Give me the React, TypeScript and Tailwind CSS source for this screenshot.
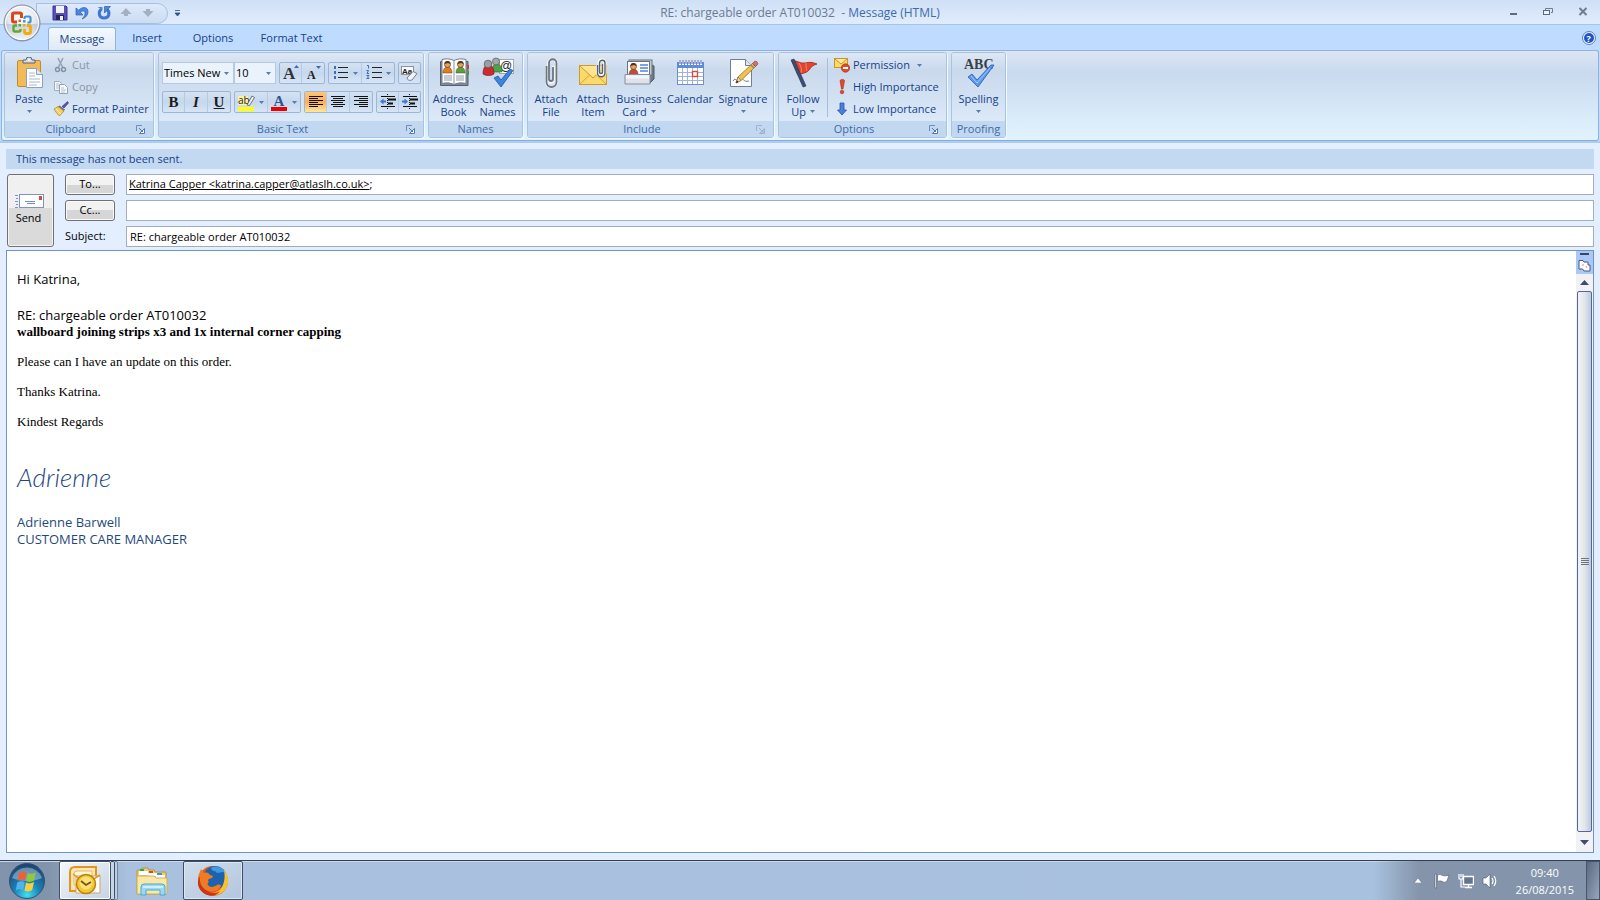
import React from 'react';

type IconProps = { children: React.ReactNode; w?: number; h?: number; box?: string };

function Icon({ children, w = 16, h = 16, box }: IconProps) {
  return (
    <svg width={w} height={h} viewBox={box ?? `0 0 ${w} ${h}`} className="shrink-0" aria-hidden="true">
      {children}
    </svg>
  );
}

function Caret({ dim = false }: { dim?: boolean }) {
  return (
    <Icon w={5} h={3}>
      <path d="M0 0h5L2.500 3z" fill={dim ? '#8fa3c2' : '#567db1'} />
    </Icon>
  );
}

function OfficeLogo() {
  return (
    <Icon w={38} h={38}>
      <defs>
        <radialGradient id="orb" cx="50%" cy="35%" r="65%">
          <stop offset="0" stopColor="#ffffff" />
          <stop offset="0.6" stopColor="#e4e8ee" />
          <stop offset="1" stopColor="#9aa6b8" />
        </radialGradient>
        <linearGradient id="orbLow" x1="0" y1="0" x2="0" y2="1">
          <stop offset="0" stopColor="#b9c2d0" stopOpacity="0.7" />
          <stop offset="1" stopColor="#ffffff" stopOpacity="0.9" />
        </linearGradient>
      </defs>
      <circle cx="19" cy="19" r="18" fill="url(#orb)" stroke="#7d8ca5" strokeWidth="1" />
      <path d="M2 20h34a17 16 0 0 1-34 0z" fill="url(#orbLow)" />
      <circle cx="19" cy="19" r="16.500" fill="none" stroke="#fff" strokeWidth="1" />
      <g fill="none">
        <path d="M14 18h-3q-1.500 0-1.500-1.500v-6Q9.500 9 11 9h6q1.500 0 1.500 1.500V14" stroke="#d9481c" strokeWidth="3" />
        <path d="M21.500 15v-1q0-1.500 1.500-1.500h3q1.500 0 1.500 1.500v3q0 1.500-1.500 1.500h-1.500" stroke="#3f93d8" strokeWidth="2.200" />
        <path d="M14 21.500h-2q-1.500 0-1.500 1.500v3q0 1.500 1.500 1.500h4q1.500 0 1.500-1.500v-1" stroke="#5fa832" strokeWidth="2.400" />
        <path d="M24 21.500h2q1.500 0 1.500 1.500v5q0 1.500-1.500 1.500h-3q-1.500 0-1.500-1.500v-3" stroke="#f4ab12" strokeWidth="2.800" />
      </g>
      <rect x="15.500" y="15.500" width="2.500" height="2.500" fill="#e8641f" />
      <rect x="20" y="16" width="2.500" height="2.500" fill="#3f93d8" />
      <rect x="15.500" y="20" width="2.500" height="2.500" fill="#5fa832" />
      <rect x="20" y="20" width="2.500" height="2.500" fill="#f4ab12" />
    </Icon>
  );
}

function SaveIcon() {
  return (
    <Icon>
      <path d="M1 1h13l1 1v13H1z" fill="#5a4fb8" stroke="#3a3590" />
      <rect x="4" y="1" width="8" height="7" fill="#eef3fd" />
      <rect x="4" y="10" width="8" height="5" fill="#26245c" />
      <rect x="8" y="11" width="3" height="4" fill="#f1f4fb" />
    </Icon>
  );
}

function UndoIcon() {
  return (
    <Icon>
      <path d="M2 3v7h7L6.500 7.300C9 5 11.500 6 11 9c-.3 2-1.500 3.600-3 5 4-1.600 6-4 6-7.500C14 2 8.500 1 4.700 5.200z" fill="#4f86dd" stroke="#2c5fb8" strokeWidth=".7" />
    </Icon>
  );
}

function RedoIcon() {
  return (
    <Icon>
      <path d="M5.500 4C2 6.500 2.500 13 8 13s6.500-6 2.500-9" fill="none" stroke="#3f76d2" strokeWidth="3" />
      <path d="M8.500 1.500h6l-6 6.500z" fill="#4f86dd" stroke="#2c5fb8" strokeWidth=".7" />
      <path d="M1.500 2h5v3z" fill="#4f86dd" />
    </Icon>
  );
}

function PasteIcon() {
  return (
    <Icon w={32} h={32}>
      <rect x="4.500" y="3.500" width="23" height="26" rx="1.500" fill="#f0bb58" stroke="#c68a2c" />
      <path d="M10 6V3h3a3 3 0 0 1 6 0h3v3z" fill="#d7dbe2" stroke="#5c6370" />
      <circle cx="16" cy="3" r="1" fill="#fff" />
      <path d="M13.500 11.500h10l6 6v13h-16z" fill="#fff" stroke="#8aa0c0" />
      <path d="M23.500 11.500v6h6" fill="#dce7f5" stroke="#8aa0c0" />
      <path d="M16 16h6M16 19h6M16 22h11M16 25h11M16 28h8" stroke="#a9b8ce" />
    </Icon>
  );
}

function CutIcon() {
  return (
    <Icon>
      <path d="M5 1l5 10M10 1L5 11" stroke="#98a4b4" strokeWidth="1.600" />
      <circle cx="4.500" cy="12.500" r="2" fill="none" stroke="#8391a5" strokeWidth="1.400" />
      <circle cx="10.500" cy="12.500" r="2" fill="none" stroke="#8391a5" strokeWidth="1.400" />
    </Icon>
  );
}

function CopyIcon() {
  return (
    <Icon>
      <path d="M1.500 2.500h5l2 2v7h-7z" fill="#f3f6fa" stroke="#a0acbe" />
      <path d="M6.500 5.500h5l3 3v6h-8z" fill="#f8fafc" stroke="#94a2b7" />
      <path d="M3 5h3M3 7h3M3 9h3M8 9h3M8 11h5M8 13h4" stroke="#b4bfce" />
    </Icon>
  );
}

function PainterIcon() {
  return (
    <Icon>
      <path d="M14.500 0.500l1 1.500-4.500 5-2-1.500z" fill="#5b51b5" stroke="#37307f" strokeWidth=".6" />
      <path d="M6.500 4.500l5.500 4-1.500 2-6-4.500z" fill="#6e7480" />
      <path d="M1 8l4-2.500 6 4.500-4.500 5C4.500 13 2.500 11 1 8z" fill="#f2cf63" stroke="#a8862b" strokeWidth=".7" />
      <path d="M3 8l5 5" stroke="#fff3b4" />
    </Icon>
  );
}

function Person({ x, y, c }: { x: number; y: number; c: string }) {
  return (
    <g transform={`translate(${x} ${y})`}>
      <path d="M0 12c0-4 2-6 4.500-6S9 8 9 12z" fill={c} stroke="#5a3b22" strokeWidth=".5" />
      <circle cx="4.500" cy="3.500" r="3" fill="#e9a05c" stroke="#5a3b22" strokeWidth=".7" />
      <path d="M1.500 3a3 3 0 0 1 6 0L5 2z" fill="#4a3424" />
    </g>
  );
}

function AddressBookIcon() {
  return (
    <Icon w={32} h={32}>
      <path d="M2.500 4.500H30v24H2.500z" fill="#7f8a9a" stroke="#555f6e" />
      <path d="M4 2.500c4-1 8-1 12 1 4-2 8-2 12-1v24c-4-1-8-1-12 1-4-2-8-2-12-1z" fill="#fff" stroke="#77808d" />
      <path d="M16 3v24" stroke="#8a93a0" />
      <Person x={5} y={4} c="#e57a1d" />
      <Person x={18} y={4} c="#53a43d" />
      <path d="M6 19h8M6 21h8M6 23h8M18 19h8M18 21h8M18 23h8" stroke="#8f99a8" />
      <path d="M29 8h2v4h-2z" fill="#d63d2c" />
      <path d="M29 14h2v4h-2z" fill="#4a9a3c" />
    </Icon>
  );
}

function CheckNamesIcon() {
  return (
    <Icon w={32} h={32}>
      <rect x="17.500" y="2.500" width="14" height="14" fill="#fff" stroke="#a0a8b4" />
      <text x="18" y="13" fontSize="12" fontFamily="Liberation Sans" fill="#222">@</text>
      <path d="M10 15c0-6 2-8 5-8s5 3 5 8z" fill="#4ba546" stroke="#2c6c2c" strokeWidth=".6" />
      <circle cx="14" cy="4.500" r="3.500" fill="#a3a9a7" stroke="#55595c" strokeWidth=".7" />
      <path d="M1 17c0-6 2-9 5.500-9S12 11 12 17c-3 2-8 2-11 0z" fill="#cf2930" stroke="#7f1418" strokeWidth=".6" />
      <circle cx="6" cy="7" r="3.800" fill="#9a9fa4" stroke="#4f5357" strokeWidth=".7" />
      <path d="M12 21l4-2 3 4L28 12l3 1.500L19 30z" fill="#3c84dd" stroke="#1e56a8" strokeWidth=".8" />
    </Icon>
  );
}

function ClipIcon() {
  return (
    <Icon w={32} h={32}>
      <path d="M18.500 9v14a2.500 2.500 0 0 1-5 0V6.500a4 4 0 0 1 8 0V25a5 5 0 0 1-10 0V9" fill="none" stroke="#fff" strokeWidth="3" opacity=".7" />
      <path d="M18 10v12a2 2 0 0 1-4 0V6a3.500 3.500 0 0 1 7.500 0v19a5 5 0 0 1-10 0V9" fill="none" stroke="#6d747e" strokeWidth="1.800" />
    </Icon>
  );
}

function AttachItemIcon() {
  return (
    <Icon w={32} h={32}>
      <rect x="2.500" y="8.500" width="27" height="19" fill="#fbd96a" stroke="#cf9b2a" />
      <path d="M3 27l9.500-9M29 27l-9.500-9" stroke="#d8a83a" />
      <path d="M3 9l13 12L29 9" fill="#fde58f" stroke="#cf9b2a" />
      <path d="M26 7v8a2 2 0 0 1-4 0V6a3 3 0 0 1 6 0v10a4 4 0 0 1-7.500 0V8" fill="none" stroke="#fff" strokeWidth="3" />
      <path d="M25.500 7v8a1.500 1.500 0 0 1-3 0V6a2.700 2.700 0 0 1 5.500 0v10a3.700 3.700 0 0 1-7.500 0V8" fill="none" stroke="#596069" strokeWidth="1.400" />
    </Icon>
  );
}

function CardIcon() {
  return (
    <Icon w={32} h={32}>
      <path d="M27 7l4 2v13l-5 5V10z" fill="#707a89" stroke="#4f5866" />
      <rect x="6" y="3" width="23" height="15" fill="#c2cad6" stroke="#697484" />
      <rect x="4.500" y="4.500" width="22" height="16" fill="#fff" stroke="#697484" />
      <Person x={6} y={6} c="#c8473a" />
      <path d="M17 8h8M17 11h8M17 14h8" stroke="#4f86d6" strokeWidth="1.300" />
      <path d="M2 17.500h25V27H2z" fill="#dfe2e8" stroke="#878f9c" />
      <path d="M3 18.500h23v3H3z" fill="#f4f5f8" />
    </Icon>
  );
}

function CalendarIcon() {
  return (
    <Icon w={32} h={32}>
      <rect x="3.500" y="5.500" width="26" height="22" fill="#fff" stroke="#6e8fc9" />
      <rect x="3" y="5" width="27" height="6" fill="#5c8be0" />
      <path d="M6 3v5M9 3v5M12 3v5M15 3v5M18 3v5M21 3v5M24 3v5M27 3v5" stroke="#fff" strokeWidth="2" />
      <path d="M6 3v4M9 3v4M12 3v4M15 3v4M18 3v4M21 3v4M24 3v4M27 3v4" stroke="#4c5f86" strokeWidth="1" />
      <path d="M4 15.500h25M4 19.500h25M4 23.500h25M8.500 11v16M13.500 11v16M18.500 11v16M23.500 11v16" stroke="#9db3da" />
      <rect x="18.500" y="14.500" width="5" height="5" fill="#fff" stroke="#e2482d" strokeWidth="1.400" />
    </Icon>
  );
}

function SignatureIcon() {
  return (
    <Icon w={32} h={32}>
      <path d="M3.500 2.500h15l6 6v21h-21z" fill="#fff" stroke="#6f7f98" />
      <path d="M18.500 2.500v6h6" fill="#dce6f4" stroke="#6f7f98" />
      <path d="M6 24c3-5 4 3 7-1s3 3 9 1" fill="none" stroke="#5e7fb8" />
      <path d="M9 26l2-6L25.500 6.500l3 3-14 13.500z" fill="#f4c04b" stroke="#9a6f1c" strokeWidth=".8" />
      <path d="M11 20l3 3.500-5 2.500z" fill="#f6deb4" stroke="#6b5325" strokeWidth=".6" />
      <path d="M9 26l1-2.500 1.500 1.500z" fill="#222" />
      <path d="M25.500 6.500l2-2c1.500-1 4 1 3 3l-2 2z" fill="#d2706e" stroke="#83403f" strokeWidth=".7" />
      <path d="M24 8l3 3" stroke="#7f8a96" strokeWidth="1.500" />
    </Icon>
  );
}

function FlagIcon() {
  return (
    <Icon w={32} h={32}>
      <path d="M5 4c5-1 8 3 13 2s7-1 12 1c-4 1-6 3-8 6s-6 3-11 5z" fill="#e5452c" stroke="#a52717" strokeWidth=".8" />
      <path d="M12 6c2 3 3 6 2 10M19 6c0 3 0 5 1 8" stroke="#f58a6f" fill="none" />
      <path d="M4 3l3-1 12 27-3 1z" fill="#3c4f72" stroke="#24344f" strokeWidth=".6" />
    </Icon>
  );
}

function PermissionIcon() {
  return (
    <Icon>
      <rect x=".5" y="1.500" width="13" height="9" fill="#fbd96a" stroke="#c9952a" />
      <path d="M1 2l6 5 6-5" fill="#fde9a2" stroke="#c9952a" />
      <circle cx="11.500" cy="11" r="4.200" fill="#e04b2a" stroke="#9f2c12" strokeWidth=".6" />
      <rect x="9" y="10" width="5" height="2" fill="#fff" />
    </Icon>
  );
}

function SpellingIcon() {
  return (
    <Icon w={32} h={32}>
      <text x="1" y="12" fontSize="14" fontWeight="700" fontFamily="Liberation Serif" fill="#3b3f47">ABC</text>
      <path d="M5 20l4-3 5 6L28 8l3 0L15 30z" fill="#5d97ee" stroke="#2459b4" strokeWidth=".8" />
      <path d="M8 19l6 7L27 11" fill="none" stroke="#a5c8ff" />
    </Icon>
  );
}

function Launcher({ dim = false }: { dim?: boolean }) {
  return (
    <button type="button" aria-label="More settings" className="flex w-[17px]">
      <Icon w={9} h={9}>
        <path d="M.5 6V.5H6" fill="none" stroke={dim ? '#9fb3cf' : '#6b8fbf'} />
        <path d="M3 3l4 4M8.500 3.500v5h-5z" fill={dim ? '#b6c6dd' : '#fff'} stroke={dim ? '#9fb3cf' : '#5379ad'} />
      </Icon>
    </button>
  );
}

function Group({ title, children, launcher, dim }: { title: string; children: React.ReactNode; launcher?: boolean; dim?: boolean }) {
  return (
    <section className="flex flex-col overflow-hidden rounded-[3px] border border-[#a9c3e2] shadow-[1px_1px_0_#f1f7fe]">
      <div className="flex h-[68px] bg-linear-to-b from-[#dee8f4] from-0% via-[#c9d9ec] via-25% to-[#dbe9f8] pt-px">{children}</div>
      <div className="flex h-4 items-center bg-[#c1d8f0]">
        <h2 className="flex-1 text-center text-[#3e6aaa]">{title}</h2>
        {launcher && <Launcher dim={dim} />}
      </div>
    </section>
  );
}

function Big({ icon, lines, caret, w }: { icon: React.ReactNode; lines: string[]; caret?: 'below' | 'inline'; w: string }) {
  return (
    <button type="button" className={`flex flex-col items-center pt-[3px] leading-[13px] whitespace-nowrap ${w}`}>
      {icon}
      <span className="mt-[3px]">{lines[0]}</span>
      {(lines[1] || caret) && (
        <span className="flex h-[13px] items-center gap-1">
          {lines[1]}
          {caret && <Caret />}
        </span>
      )}
    </button>
  );
}

function Small({ icon, text, disabled, caret }: { icon: React.ReactNode; text: string; disabled?: boolean; caret?: boolean }) {
  return (
    <button type="button" disabled={disabled} className="flex h-[22px] items-center gap-[3px] whitespace-nowrap disabled:text-[#8d95a3]">
      {icon}
      {text}
      {caret && (
        <span className="ml-1">
          <Caret />
        </span>
      )}
    </button>
  );
}

function Cluster({ children }: { children: React.ReactNode }) {
  return (
    <div className="flex h-[22px] divide-x divide-[#b4cae6] overflow-hidden rounded-[2px] border border-[#9ab6d9] bg-linear-to-b from-[#d5e2f2] via-[#c6d8ed] to-[#d7e5f5]">
      {children}
    </div>
  );
}

function Tool({ label, children, w, on }: { label: string; children: React.ReactNode; w: string; on?: boolean }) {
  return (
    <button
      type="button"
      aria-label={label}
      aria-pressed={on}
      className={`flex items-center justify-center gap-1 ${w} ${on ? 'bg-linear-to-b from-[#fbc77b] via-[#fcae56] to-[#fde89a]' : ''}`}
    >
      {children}
    </button>
  );
}

function Lines({ rows }: { rows: [number, number][] }) {
  return (
    <Icon w={16} h={14}>
      {rows.map(([x, w], i) => (
        <rect key={i} x={x} y={1 + i * 2} width={w} height={1} fill="#111" />
      ))}
    </Icon>
  );
}

const leftRows: [number, number][] = [[1, 14], [1, 9], [1, 14], [1, 9], [1, 14], [1, 9]];
const centerRows: [number, number][] = [[1, 14], [3, 10], [1, 14], [3, 10], [1, 14], [3, 10]];
const rightRows: [number, number][] = [[1, 14], [6, 9], [1, 14], [6, 9], [1, 14], [6, 9]];

function IndentIcon({ out }: { out?: boolean }) {
  return (
    <Icon>
      <path d="M1 2.500h14M1 12.500h14" stroke="#111" />
      <path d="M8 5.500h8M8 9.500h5" stroke="#111" strokeWidth="2" />
      <path d="M7.500 0v16" stroke="#111" strokeDasharray="1 1" />
      <path d={out ? 'M0 7.500l3.500-3v2H6v2H3.500v2z' : 'M6 7.500l-3.500-3v2H0v2h2.500v2z'} fill="#3f77cf" />
    </Icon>
  );
}

function Combo({ label, value, w }: { label: string; value: string; w: string }) {
  return (
    <div className={`flex h-[22px] items-center border border-[#b3c9e6] bg-[#eaf2fb] pr-1 ${w}`}>
      <select aria-label={label} defaultValue={value} className="h-5 min-w-0 flex-1 appearance-none bg-transparent pl-px text-black outline-none">
        <option>{value}</option>
      </select>
      <Caret />
    </div>
  );
}

function Ribbon() {
  return (
    <div className="mx-px flex gap-1 rounded-[3px] border border-[#8db2e3] border-b-[#7fb0dc] bg-linear-to-b from-[#dbe6f3] from-0% via-[#c9daee] via-25% to-[#e2f3ff] px-[2px] pt-px pb-[2px] text-[11px] text-[#15428b]">
      <Group title="Clipboard" launcher>
        <div className="flex w-[148px]">
          <Big icon={<PasteIcon />} lines={['Paste']} caret="below" w="w-12" />
          <div className="flex flex-col">
            <Small icon={<CutIcon />} text="Cut" disabled />
            <Small icon={<CopyIcon />} text="Copy" disabled />
            <Small icon={<PainterIcon />} text="Format Painter" />
          </div>
        </div>
      </Group>
      <Group title="Basic Text" launcher>
        <div className="flex w-[264px] flex-col gap-[7px] pt-2 pl-[3px]">
          <div className="flex gap-[3px]">
            <div className="flex">
              <Combo label="Font" value="Times New" w="w-[72px]" />
              <Combo label="Font size" value="10" w="w-[42px]" />
            </div>
            <Cluster>
              <Tool label="Grow font" w="w-[22px]">
                <Icon w={18} h={18}>
                  <text x="1" y="15" fontSize="17" fontWeight="700" fontFamily="Liberation Serif" fill="#333">A</text>
                  <path d="M12 4l2.500-3L17 4z" fill="#3b6cb8" />
                </Icon>
              </Tool>
              <Tool label="Shrink font" w="w-[22px]">
                <Icon w={18} h={18}>
                  <text x="3" y="15" fontSize="12" fontWeight="700" fontFamily="Liberation Serif" fill="#222">A</text>
                  <path d="M12 2l2.500 3L17 2z" fill="#3b6cb8" />
                </Icon>
              </Tool>
            </Cluster>
            <Cluster>
              <Tool label="Bullets" w="w-[33px]">
                <Icon>
                  <path d="M5 2.500h10M5 7.500h10M5 12.500h10" stroke="#222" />
                  <path d="M1 1h2v3H1zM1 6h2v3H1zM1 11h2v3H1z" fill="#3b6cb8" />
                </Icon>
                <Caret />
              </Tool>
              <Tool label="Numbering" w="w-[32px]">
                <Icon>
                  <path d="M6 2.500h10M6 7.500h10M6 12.500h10" stroke="#222" />
                  <path d="M1 .5h1.500v3M.5 5.500h2L1 8.500h2M.5 10.500h2.500L1.500 12 3 13.500H.5" fill="none" stroke="#3b6cb8" />
                </Icon>
                <Caret />
              </Tool>
            </Cluster>
            <Cluster>
              <Tool label="Clear formatting" w="w-[21px]">
                <Icon w={17} h={17}>
                  <rect x=".5" y="1.500" width="12" height="8" fill="#f7f9fc" stroke="#8a94a3" />
                  <text x="1" y="8.500" fontSize="8" fontWeight="700" fontFamily="Liberation Sans" fill="#222">Aa</text>
                  <path d="M6 13l6-6.500 4 2-5 6.500c-2 1-5 0-5-2z" fill="#f4f6fa" stroke="#717f96" />
                </Icon>
              </Tool>
            </Cluster>
          </div>
          <div className="flex gap-[3px] font-['Liberation_Serif',serif] text-[15px] text-[#1c1c1c]">
            <Cluster>
              <Tool label="Bold" w="w-[22px]"><b>B</b></Tool>
              <Tool label="Italic" w="w-[23px]"><b><i>I</i></b></Tool>
              <Tool label="Underline" w="w-[22px]"><b className="underline">U</b></Tool>
            </Cluster>
            <Cluster>
              <Tool label="Highlight" w="w-[33px]">
                <Icon w={17} h={17}>
                  <rect x="0" y="2" width="10" height="9" fill="#fdf2a0" />
                  <text x="0" y="10" fontSize="10" fontFamily="Open Sans" fill="#222">ab</text>
                  <path d="M9 11l5-9 2.500 1.500-5 8z" fill="#eef1f6" stroke="#555" strokeWidth=".8" />
                  <rect x="0" y="13" width="16" height="4" fill="#ffff00" />
                </Icon>
                <Caret />
              </Tool>
              <Tool label="Font color" w="w-[32px]">
                <Icon w={17} h={17}>
                  <text x="2.500" y="11.500" fontSize="15" fontWeight="700" fontFamily="Liberation Serif" fill="#2f5597">A</text>
                  <rect x="0" y="13" width="16" height="4" fill="#f00000" />
                </Icon>
                <Caret />
              </Tool>
            </Cluster>
            <Cluster>
              <Tool label="Align left" w="w-[22px]" on><Lines rows={leftRows} /></Tool>
              <Tool label="Center" w="w-[23px]"><Lines rows={centerRows} /></Tool>
              <Tool label="Align right" w="w-[22px]"><Lines rows={rightRows} /></Tool>
            </Cluster>
            <Cluster>
              <Tool label="Decrease indent" w="w-[22px]"><IndentIcon out /></Tool>
              <Tool label="Increase indent" w="w-[21px]"><IndentIcon /></Tool>
            </Cluster>
          </div>
        </div>
      </Group>
      <Group title="Names">
        <div className="flex w-[93px] justify-center">
          <Big icon={<AddressBookIcon />} lines={['Address', 'Book']} w="w-11" />
          <Big icon={<CheckNamesIcon />} lines={['Check', 'Names']} w="w-11" />
        </div>
      </Group>
      <Group title="Include" launcher dim>
        <div className="flex w-[245px] pl-[2px]">
          <Big icon={<ClipIcon />} lines={['Attach', 'File']} w="w-[42px]" />
          <Big icon={<AttachItemIcon />} lines={['Attach', 'Item']} w="w-[42px]" />
          <Big icon={<CardIcon />} lines={['Business', 'Card']} caret="inline" w="w-[50px]" />
          <Big icon={<CalendarIcon />} lines={['Calendar']} w="w-[52px]" />
          <Big icon={<SignatureIcon />} lines={['Signature']} caret="below" w="w-[54px]" />
        </div>
      </Group>
      <Group title="Options" launcher>
        <div className="flex w-[167px]">
          <Big icon={<FlagIcon />} lines={['Follow', 'Up']} caret="inline" w="w-12" />
          <div className="my-1 mr-[6px] w-px bg-[#a5bedd]" />
          <div className="flex flex-col">
            <Small icon={<PermissionIcon />} text="Permission" caret />
            <Small
              icon={
                <Icon>
                  <path d="M6 1.500c1-1.500 4-1.500 4.500 0L9 10H7.500z" fill="#e5482a" stroke="#a52d16" strokeWidth=".6" />
                  <circle cx="8" cy="13" r="1.800" fill="#e5482a" stroke="#a52d16" strokeWidth=".6" />
                </Icon>
              }
              text="High Importance"
            />
            <Small
              icon={
                <Icon>
                  <path d="M6 2h4v7h2.500L8 14 3.500 9H6z" fill="#4a7fe0" stroke="#2453ae" strokeWidth=".8" />
                </Icon>
              }
              text="Low Importance"
            />
          </div>
        </div>
      </Group>
      <Group title="Proofing">
        <div className="flex w-[53px] justify-center">
          <Big icon={<SpellingIcon />} lines={['Spelling']} caret="below" w="w-12" />
        </div>
      </Group>
    </div>
  );
}

function Header() {
  return (
    <header className="relative bg-[#bfdbff]">
      <div className="grid h-[25px] grid-cols-[1fr_auto_1fr] items-center border-b border-[#a5c4ec] bg-linear-to-b from-[#cfe0f6] to-[#e0ecfb] pt-[2px]">
        <div className="flex items-center gap-[6px] pl-9">
          <div className="flex h-[21px] w-[132px] items-center gap-[6px] rounded-r-full border border-[#a3bfe6] bg-linear-to-b from-[#dfeafa] to-[#cbdcf3] pl-[15px]">
            <button type="button" aria-label="Save"><SaveIcon /></button>
            <button type="button" aria-label="Undo"><UndoIcon /></button>
            <button type="button" aria-label="Redo"><RedoIcon /></button>
            <button type="button" aria-label="Previous item">
              <Icon><path d="M8 3l5.500 6H10v2H6V9H2.500z" fill="#a5afc0" /></Icon>
            </button>
            <button type="button" aria-label="Next item">
              <Icon><path d="M8 12l5.500-6H10V4H6v2H2.500z" fill="#a5afc0" /></Icon>
            </button>
          </div>
          <button type="button" aria-label="Customize toolbar">
            <Icon w={7} h={7}>
              <path d="M1 .5h5M1 3h5L3.500 6z" fill="#31508c" stroke="#31508c" strokeWidth=".8" />
            </Icon>
          </button>
        </div>
        <h1 className="text-[12px] whitespace-pre text-[#6c7a91]">
          RE: chargeable order AT010032  - <span className="text-[#3e6aaa]">Message (HTML)</span>
        </h1>
        <div className="flex items-center justify-end gap-[25px] pr-3 pb-[3px]">
          <button type="button" aria-label="Minimize">
            <Icon w={9} h={9}><rect x="1" y="6" width="7" height="2" fill="#5d6b80" /></Icon>
          </button>
          <button type="button" aria-label="Restore">
            <Icon w={10} h={9}>
              <path d="M2.500 3V1.500h7v4H8" fill="none" stroke="#6d7c92" />
              <rect x=".5" y="3.500" width="6" height="4" fill="#eef4fc" stroke="#5d6b80" />
            </Icon>
          </button>
          <button type="button" aria-label="Close">
            <Icon w={10} h={9}><path d="M1.500 1l7 7M8.500 1l-7 7" stroke="#6d7c92" strokeWidth="2" /></Icon>
          </button>
        </div>
      </div>
      <div className="flex h-[25px] items-end pl-12 text-[11px] text-[#15428b]">
        <nav className="flex h-[23px]">
          <button type="button" className="w-[68px] rounded-t-[3px] border border-b-0 border-[#8db2e3] bg-linear-to-b from-[#f4f9fe] to-[#dfe9f5]">Message</button>
          <button type="button" className="w-[62px]">Insert</button>
          <button type="button" className="w-[70px]">Options</button>
          <button type="button" className="w-[87px]">Format Text</button>
        </nav>
        <button type="button" aria-label="Help" className="mr-1 mb-[5px] ml-auto">
          <Icon w={14} h={14}>
            <circle cx="7" cy="7" r="6.500" fill="#eef4ff" stroke="#5c82c2" />
            <circle cx="7" cy="7" r="5" fill="#1f55c4" />
            <text x="4.500" y="10.500" fontSize="9" fontWeight="700" fontFamily="Open Sans" fill="#fff">?</text>
          </Icon>
        </button>
      </div>
      <Ribbon />
      <button type="button" aria-label="Office menu" className="absolute top-1 left-[3px] rounded-full">
        <OfficeLogo />
      </button>
    </header>
  );
}

const fieldButton = 'h-[21px] rounded-[3px] border border-[#707070] bg-linear-to-b from-[#f2f2f2] from-50% to-[#d6d6d6] to-50% shadow-[inset_0_0_0_1px_#fafafa]';
const fieldBox = 'h-[21px] min-w-0 border border-[#a3aebd] bg-white';

function Compose() {
  return (
    <form className="flex gap-[11px] pl-px text-[11px] text-black" onSubmit={(e) => e.preventDefault()}>
      <button
        type="submit"
        className="flex w-[47px] flex-col items-center justify-center gap-px rounded-[3px] border border-[#707070] bg-linear-to-b from-[#f0f0f0] from-47% to-[#dadada] to-47% pr-1 shadow-[inset_0_0_0_1px_#f4f4f4]"
      >
        <Icon w={30} h={15}>
          <rect x="5.500" y=".5" width="24" height="13" fill="#fff" stroke="#7c93c4" />
          <path d="M1 1.500h3M2 4.500h2M1 7.500h3M2 10.500h2M1 13.500h3" stroke="#7c93c4" />
          <rect x="25" y="2" width="3" height="4" fill="#c9523f" />
          <path d="M11 7.500h10M13 9.500h8" stroke="#6f8bc6" />
        </Icon>
        Send
      </button>
      <div className="grid flex-1 grid-cols-[50px_1fr] items-center gap-x-[11px] gap-y-[5px]">
        <button type="button" className={fieldButton}>To...</button>
        <div className={`flex items-center pl-[2px] ${fieldBox}`}>
          <a href="mailto:katrina.capper@atlaslh.co.uk" className="underline">Katrina Capper &lt;katrina.capper@atlaslh.co.uk&gt;</a>;
          <input aria-label="To" className="min-w-0 flex-1 outline-none" />
        </div>
        <button type="button" className={fieldButton}>Cc...</button>
        <input aria-label="Cc" className={`px-[3px] outline-none ${fieldBox}`} />
        <label htmlFor="subject">Subject:</label>
        <input id="subject" defaultValue="RE: chargeable order AT010032" className={`px-[3px] outline-none ${fieldBox}`} />
      </div>
    </form>
  );
}

function ScrollBar() {
  return (
    <div className="flex w-[17px] flex-col items-center bg-[#f2f2f4]">
      <div className="flex h-[23px] w-full flex-col items-center gap-1 bg-[#a9c8f5] pt-[2px]">
        <Icon w={9} h={2}><rect width="9" height="2" fill="#35466b" /></Icon>
        <Icon w={13} h={13}>
          <path d="M1 1.500h4l1 1.500h4v3h2v6H6L4.500 10H1z" fill="#fff" stroke="#46587f" />
          <circle cx="5" cy="6" r=".8" fill="#d77" />
          <circle cx="8.500" cy="8" r=".8" fill="#d77" />
        </Icon>
      </div>
      <button type="button" aria-label="Scroll up" className="flex h-[17px] items-center">
        <Icon w={9} h={5}><path d="M0 5h9L4.500 0z" fill="#3d4d6e" /></Icon>
      </button>
      <div className="flex w-[15px] flex-1 items-center justify-center rounded-[2px] border border-[#55669a] bg-linear-to-r from-[#f1f3f6] via-[#e2e7ec] to-[#b9cbdc]">
        <Icon w={8} h={8}><path d="M0 .5h8M0 2.500h8M0 4.500h8M0 6.500h8" stroke="#6b7685" /></Icon>
      </div>
      <button type="button" aria-label="Scroll down" className="flex h-[20px] items-center">
        <Icon w={9} h={5}><path d="M0 0h9L4.500 5z" fill="#3d4d6e" /></Icon>
      </button>
    </div>
  );
}

function MessageBody() {
  return (
    <main className="mt-[3px] flex flex-1 border border-[#6f93c7] bg-white">
      <article className="flex-1 pt-[19px] pl-[10px] font-['Liberation_Serif',serif] text-[13px] leading-[15px] text-black">
        <div className="font-['Open_Sans','Noto_Sans',sans-serif] leading-[18px]">
          <p>Hi Katrina,</p>
          <p className="mt-[18px]">RE: chargeable order AT010032</p>
        </div>
        <p className="font-bold">wallboard joining strips x3 and 1x internal corner capping</p>
        <p className="mt-[15px]">Please can I have an update on this order.</p>
        <p className="mt-[15px]">Thanks Katrina.</p>
        <p className="mt-[15px]">Kindest Regards</p>
        <div className="text-[#1f497d]">
          <p className="mt-8 font-[Lato,sans-serif] text-[26px] leading-8 font-light italic">Adrienne</p>
          <p className="mt-[21px] font-['Open_Sans','Noto_Sans',sans-serif] leading-[17px]">
            Adrienne Barwell
            <br />
            CUSTOMER CARE MANAGER
          </p>
        </div>
      </article>
      <ScrollBar />
    </main>
  );
}

function StartIcon() {
  return (
    <Icon w={36} h={36}>
      <defs>
        <radialGradient id="start" cx="50%" cy="90%" r="85%">
          <stop offset="0" stopColor="#3fe0f5" />
          <stop offset="0.45" stopColor="#1c7fb5" />
          <stop offset="1" stopColor="#1d4672" />
        </radialGradient>
      </defs>
      <circle cx="18" cy="18" r="17.500" fill="url(#start)" stroke="#31506f" />
      <path d="M3 15a15.500 14 0 0 1 30 0c-9 4-21 4-30 0z" fill="#fff" opacity=".35" />
      <path d="M10 10c3-2 5-1.500 7.500-.5l-1.500 8c-2.500-1-5-1.500-7.500.5z" fill="#ee6136" />
      <path d="M18.800 10c3 1.500 5 1 8-.5l-1.800 8c-2.500 1.500-5 2-7.700.5z" fill="#8fca3c" />
      <path d="M8.200 19.500c3-2 5-1.500 7.500-.5l-1.500 8c-2.500-1-5-1.500-7.500.5z" fill="#4fb3ec" />
      <path d="M17 19.500c3 1.500 5 1 8-.5l-1.800 8c-2.500 1.500-5 2-7.700.5z" fill="#fbcf3a" />
    </Icon>
  );
}

function OutlookIcon() {
  return (
    <Icon w={34} h={32}>
      <path d="M2 7q0-5 5-5h21v20q0 4-4 4H2z" fill="#fbe6b8" stroke="#e0961c" strokeWidth="2" />
      <path d="M6 9q0-3 3-3h15v14H6z" fill="#fdf6e2" stroke="#efb74d" />
      <path d="M8 11h24v17H8z" fill="#fff" stroke="#c9a86a" />
      <path d="M5 9l13 10L32 10" fill="none" stroke="#e29a24" strokeWidth="1.500" />
      <circle cx="18" cy="19" r="9.500" fill="#f7c531" stroke="#bd7f10" strokeWidth="1.500" />
      <circle cx="18" cy="18" r="6.500" fill="#fde27a" />
      <path d="M13 16l5 4 5-3" fill="none" stroke="#7c4f0c" strokeWidth="1.800" />
    </Icon>
  );
}

function ExplorerIcon() {
  return (
    <Icon w={34} h={32}>
      <path d="M2 5h4l1-2h6l1 2h5l1 2h11v22H2z" fill="#e7cf7c" stroke="#b8973d" />
      <path d="M4 6h9v4H4z" fill="#fff" /><rect x="5" y="4" width="4" height="2" fill="#3ca34a" />
      <path d="M13 8h9v3h-9z" fill="#fff" /><rect x="14" y="6" width="4" height="2" fill="#d5482e" />
      <path d="M21 10h9v3h-9z" fill="#fff" /><rect x="22" y="8" width="5" height="2" fill="#3f8fd6" />
      <path d="M2 11h17l2 2h11v16H2z" fill="#f8e9a9" stroke="#cdb05a" />
      <path d="M6 30V22q0-3 3-3h18q3 0 3 3v8h-5v-5H11v5z" fill="#9bd8f3" stroke="#4ea6d2" />
      <path d="M8 22h20" stroke="#e4f7ff" strokeWidth="1.500" />
    </Icon>
  );
}

function FirefoxIcon() {
  return (
    <Icon w={32} h={32}>
      <circle cx="16" cy="16" r="15" fill="#e65a1c" />
      <circle cx="18" cy="12.500" r="11.500" fill="#1d62ad" />
      <path d="M14 3c5-3 12-1 15 5-4-2-6 0-8 0s-2-2-4-2-2-1-3-3z" fill="#3f9bdc" />
      <path d="M27 5c5 6 6 15 0 21-5 5-14 6-20 1 9 2 15 0 18-5 3-6 3-11 2-17z" fill="#fbc02e" />
      <path d="M2 9l2-5 3 4c3-1 5 0 6 2l3 1c0 2-2 2-4 3s0 3 0 3c-1 1-2 1-1 3 2 3 6 2 9 0 2-1 4 0 4 1-2 4-6 6-11 5C4 25-1 18 2 9z" fill="#f07b22" />
      <path d="M3 11c-1 7 2 13 9 16 4 1.500 8 1 11-1-3 5-10 6-15 3C1 25-1 17 3 11z" fill="#c93516" />
    </Icon>
  );
}

function Taskbar() {
  return (
    <footer className="flex h-10 items-stretch border-t border-[#2f3f55] bg-linear-to-r from-[#8294ac] from-3% via-[#a9c1de] via-8% to-[#a8c1df] shadow-[inset_0_1px_0_#c9d9ea]">
      <button type="button" aria-label="Start" className="flex w-[59px] items-center pl-[9px]"><StartIcon /></button>
      <button type="button" aria-label="Outlook" className="flex w-[52px] items-center justify-center rounded-[2px] border border-[#3e4f68] bg-linear-to-br from-[#f3f7fb] to-[#c5d3e4] shadow-[inset_0_0_0_1px_#fff]"><OutlookIcon /></button>
      <div className="w-1 rounded-r-[2px] border border-l-0 border-[#3e4f68] bg-[#c8d7e8]" />
      <div className="w-[3px] rounded-r-[2px] border border-l-0 border-[#7186a2] bg-[#bccee2]" />
      <button type="button" aria-label="File explorer" className="ml-[2px] flex w-[63px] items-center justify-center"><ExplorerIcon /></button>
      <button type="button" aria-label="Firefox" className="flex w-[60px] items-center justify-center rounded-[2px] border border-[#3e4f68] bg-linear-to-br from-[#cfdcec] to-[#b3c6de] shadow-[inset_0_0_0_1px_#dce7f3]"><FirefoxIcon /></button>
      <div className="ml-auto flex items-center bg-linear-to-r from-[#8494ab00] to-[#8494ab] to-20% pl-10">
        <button type="button" aria-label="Show hidden icons" className="mr-3">
          <Icon w={8} h={5}><path d="M0 5h8L4 0z" fill="#fff" stroke="#5a6b82" strokeWidth=".5" /></Icon>
        </button>
        <button type="button" aria-label="Action centre" className="mr-2">
          <Icon><path d="M1 1h1.500v14H1zM3.500 2c3-1 4 0 5 .5s4 .5 6.500-.5c-1 2-1 5-3 7-2 .5-3 0-3.500-.5S5 7.500 3.500 8.500z" fill="#fff" stroke="#4b5a70" strokeWidth=".6" /></Icon>
        </button>
        <button type="button" aria-label="Network" className="mr-2">
          <Icon>
            <path d="M5.500 3.500h10v8h-10z" fill="#64758e" stroke="#fff" strokeWidth="1.400" />
            <path d="M7 14.500h7M10.500 12v2" stroke="#fff" strokeWidth="1.400" />
            <path d="M1 1v5h4V1M3 1v3M3 6v8h4" fill="none" stroke="#fff" strokeWidth="1.200" />
          </Icon>
        </button>
        <button type="button" aria-label="Volume" className="mr-[18px]">
          <Icon>
            <path d="M1 5h3l4-4v14l-4-4H1z" fill="#fff" stroke="#4b5a70" strokeWidth=".6" />
            <path d="M10 5q2 3 0 6M12 3q3.500 5 0 10" fill="none" stroke="#fff" strokeWidth="1.200" />
          </Icon>
        </button>
        <div className="mr-3 text-center text-[11px] leading-[17px] text-white">
          <p>09:40</p>
          <p>26/08/2015</p>
        </div>
        <button type="button" aria-label="Show desktop" className="h-full w-[14px] border border-[#47566b] bg-linear-to-br from-[#5b6a80] to-[#97a6bb]" />
      </div>
    </footer>
  );
}

export default function App() {
  return (
    <div className="flex min-h-screen flex-col bg-[#e3efff] font-['Open_Sans','Noto_Sans',sans-serif]">
      <Header />
      <div className="flex flex-1 flex-col border-t-2 border-[#b0cbee] px-[6px] pt-[6px] pb-[7px]">
        <p className="mb-[5px] bg-[#c3d9f1] pl-[10px] text-[11px] leading-[20px] text-[#15428b]">This message has not been sent.</p>
        <Compose />
        <MessageBody />
      </div>
      <Taskbar />
    </div>
  );
}
